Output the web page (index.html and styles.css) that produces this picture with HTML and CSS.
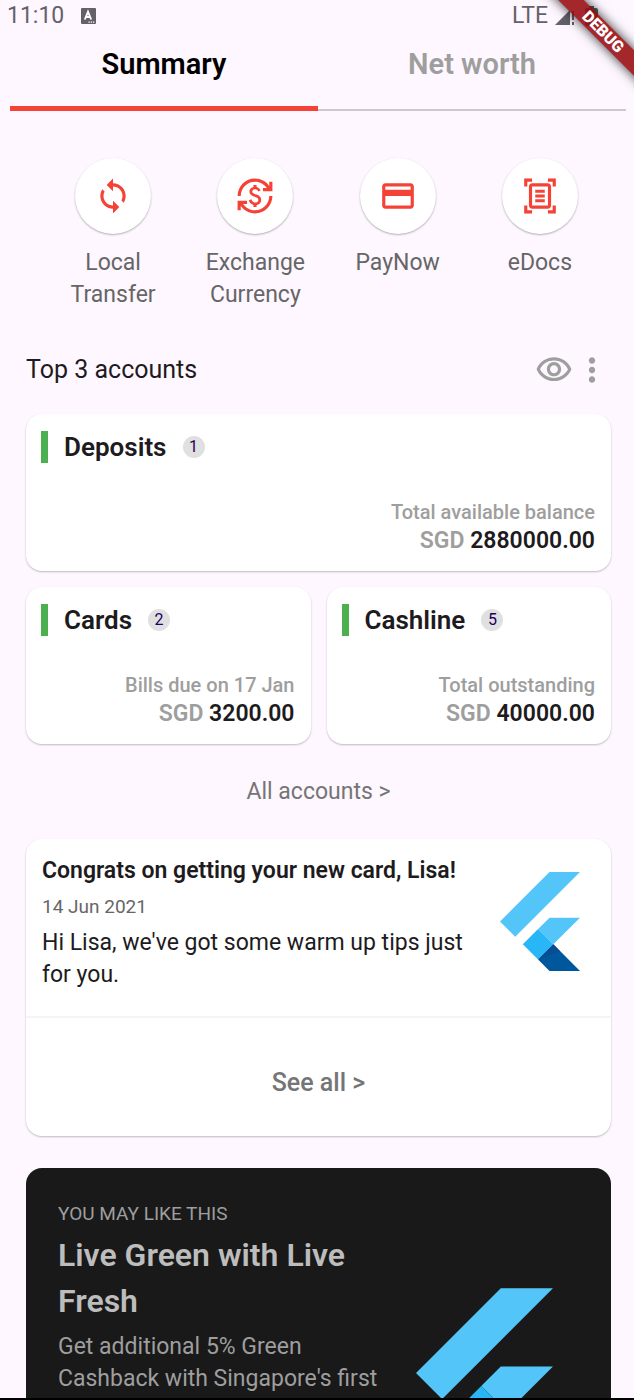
FILE: index.html
```html
<!DOCTYPE html>
<html lang="en">
<head>
<meta charset="utf-8">
<meta name="viewport" content="width=device-width, initial-scale=1">
<title>Summary</title>
<link rel="stylesheet" href="styles.css">
</head>
<body>
<svg class="defs" aria-hidden="true">
  <symbol id="flutter" viewBox="9.8 10.4 146.4 181.2">
    <path fill="#54c5f8" d="M37.7 128.9 9.8 101 100.4 10.4h55.8zM156.2 94h-55.8L79.5 114.9l27.9 27.9z"/>
    <path fill="#01579b" d="M79.5 170.7l20.9 20.9h55.8l-48.8-48.8z"/>
    <path fill="#29b6f6" d="M51.6 142.8l27.9-27.9 27.9 27.9-27.9 27.9z"/>
    <path fill="#0a4c94" d="M79.5 170.7l27.9-27.9 12 12z"/>
  </symbol>
</svg>
<div class="screen">
  <header class="status">
    <span class="clock">11:10</span>
    <svg class="status-app" viewBox="0 0 15 16" aria-hidden="true"><rect width="15" height="16" rx="1" fill="#65616a"/><path d="M3.8 11.5 7 3.8l3.2 7.7M5 9h4" fill="none" stroke="#fff" stroke-width="1.9"/><path d="M7.5 13.5h1.3v1.3H7.5zM9.8 13.5h1.3v1.3H9.8zM12 13.5h1.3v1.3H12z" fill="#fff"/></svg>
    <span class="network">LTE</span>
    <svg class="status-signal" viewBox="0 0 20 20" aria-hidden="true"><path d="M0 19 15 4v15z" fill="#65616a"/><path d="M17 5h2v9h-2zM17 16h2v3h-2z" fill="#65616a"/></svg>
    <svg class="status-battery" viewBox="0 0 13 20" aria-hidden="true"><path d="M4 0h5v2h2q2 0 2 2v14q0 2-2 2H2q-2 0-2-2V4q0-2 2-2h2z" fill="#625d66"/></svg>
    <div class="debug">DEBUG</div>
  </header>

  <nav class="tabs" role="tablist">
    <button class="tab tab-active" role="tab" aria-selected="true">Summary</button>
    <button class="tab" role="tab" aria-selected="false">Net worth</button>
  </nav>

  <main class="content">
    <section class="actions">
      <button class="action">
        <span class="circle"><svg class="icon" viewBox="0 0 24 24"><path d="M12 4V1L8 5l4 4V6c3.31 0 6 2.69 6 6 0 1.01-.25 1.97-.7 2.8l1.46 1.46C19.54 15.03 20 13.57 20 12c0-4.42-3.58-8-8-8zm0 14c-3.31 0-6-2.69-6-6 0-1.01.25-1.97.7-2.8L5.24 7.74C4.46 8.97 4 10.43 4 12c0 4.42 3.58 8 8 8v3l4-4-4-4v3z"/></svg></span>
        <span>Local<br>Transfer</span>
      </button>
      <button class="action">
        <span class="circle"><svg class="icon" viewBox="0 0 24 24"><path d="M12.89 11.1c-1.78-.59-2.64-.96-2.64-1.9 0-1.02 1.11-1.39 1.81-1.39 1.31 0 1.79.99 1.9 1.34l1.58-.67C15.39 8.03 14.72 6.56 13 6.24V5h-2v1.26C8.52 6.79 8.5 9.13 8.5 9.22c0 2.27 2.25 2.91 3.35 3.31 1.58.56 2.28 1.07 2.28 2.03 0 1.13-1.05 1.61-1.98 1.61-1.82 0-2.34-1.87-2.4-2.09l-1.65.67c.63 2.19 2.28 2.78 2.9 2.95V19h2v-1.24c.4-.09 2.9-.59 2.9-3.22 0-1.39-.61-2.61-3.01-3.44zM3 21H1v-6h6v2H4.52c1.61 2.41 4.36 4 7.48 4 4.97 0 9-4.03 9-9h2c0 6.08-4.92 11-11 11-3.72 0-7.01-1.85-9-4.67V21zM1 12C1 5.92 5.92 1 12 1c3.72 0 7.01 1.85 9 4.67V3h2v6h-6V7h2.48C17.87 4.59 15.12 3 12 3c-4.97 0-9 4.03-9 9H1z"/></svg></span>
        <span>Exchange<br>Currency</span>
      </button>
      <button class="action">
        <span class="circle"><svg class="icon" viewBox="0 0 24 24"><path d="M20 4H4c-1.11 0-1.99.89-1.99 2L2 18c0 1.11.89 2 2 2h16c1.11 0 2-.89 2-2V6c0-1.11-.89-2-2-2zm0 14H4v-6h16v6zm0-10H4V6h16v2z"/></svg></span>
        <span>PayNow</span>
      </button>
      <button class="action">
        <span class="circle"><svg class="icon" viewBox="0 0 24 24"><path d="M7 3H4v3H2V1h5v2zM22 6V1h-5v2h3v3h2zM7 21H4v-3H2v5h5v-2zM20 18v3h-3v2h5v-5h-2zM19 18c0 1.1-.9 2-2 2H7c-1.1 0-2-.9-2-2V6c0-1.1.9-2 2-2h10c1.1 0 2 .9 2 2v12zM17 6H7v12h10V6zM15 8H9v2h6V8zM15 11H9v2h6v-2zM15 14H9v2h6v-2z"/></svg></span>
        <span>eDocs</span>
      </button>
    </section>

    <section class="accounts">
      <div class="accounts-head">
        <h2>Top 3 accounts</h2>
        <button class="icon-button" aria-label="Show balances"><svg class="icon" viewBox="0 0 24 24"><path d="M12 6c3.79 0 7.17 2.13 8.82 5.5C19.17 14.87 15.79 17 12 17s-7.17-2.13-8.82-5.5C4.83 8.13 8.21 6 12 6m0-2C7 4 2.73 7.11 1 11.5 2.73 15.89 7 19 12 19s9.27-3.11 11-7.5C21.27 7.11 17 4 12 4zm0 5c1.38 0 2.5 1.12 2.5 2.5S13.38 14 12 14s-2.5-1.12-2.5-2.5S10.62 9 12 9m0-2c-2.48 0-4.5 2.02-4.5 4.5S9.52 16 12 16s4.5-2.02 4.5-4.5S14.48 7 12 7z"/></svg></button>
        <button class="icon-button" aria-label="More options"><svg class="icon" viewBox="0 0 24 24"><path d="M12 8c1.1 0 2-.9 2-2s-.9-2-2-2-2 .9-2 2 .9 2 2 2zm0 2c-1.1 0-2 .9-2 2s.9 2 2 2 2-.9 2-2-.9-2-2-2zm0 6c-1.1 0-2 .9-2 2s.9 2 2 2 2-.9 2-2-.9-2-2-2z"/></svg></button>
      </div>
      <div class="account-grid">
        <article class="card account wide">
          <div class="account-title"><h3>Deposits</h3><span class="badge">1</span></div>
          <div class="account-info"><p class="caption">Total available balance</p><p class="amount"><span class="currency">SGD</span> 2880000.00</p></div>
        </article>
        <article class="card account">
          <div class="account-title"><h3>Cards</h3><span class="badge">2</span></div>
          <div class="account-info"><p class="caption">Bills due on 17 Jan</p><p class="amount"><span class="currency">SGD</span> 3200.00</p></div>
        </article>
        <article class="card account">
          <div class="account-title"><h3>Cashline</h3><span class="badge">5</span></div>
          <div class="account-info"><p class="caption">Total outstanding</p><p class="amount"><span class="currency">SGD</span> 40000.00</p></div>
        </article>
      </div>
      <a class="all-accounts" href="#">All accounts &gt;</a>
    </section>

    <section class="card news">
      <article class="news-item">
        <div class="news-text">
          <h3>Congrats on getting your new card, Lisa!</h3>
          <p class="date">14 Jun 2021</p>
          <p>Hi Lisa, we've got some warm up tips just for you.</p>
        </div>
        <svg class="news-logo" aria-hidden="true"><use href="#flutter"/></svg>
      </article>
      <a class="see-all" href="#">See all &gt;</a>
    </section>

    <section class="promo">
      <div class="promo-text">
        <p class="eyebrow">YOU MAY LIKE THIS</p>
        <h2>Live Green with Live Fresh</h2>
        <p>Get additional 5% Green Cashback with Singapore's first</p>
      </div>
      <svg class="promo-logo" aria-hidden="true"><use href="#flutter"/></svg>
    </section>
  </main>
</div>
</body>
</html>
```
FILE: styles.css
```css
* {
  box-sizing: border-box;
}

body,
h2,
h3,
p {
  margin: 0;
}

body {
  background: #fef7ff;
  color: #1d1b20;
  font-family: Roboto, "Liberation Sans", sans-serif;
  font-size: 23px;
  line-height: 32px;
}

button {
  padding: 0;
  border: 0;
  background: none;
  font: inherit;
  color: inherit;
  cursor: pointer;
}

a {
  text-decoration: none;
}

.defs {
  display: none;
}

.screen {
  position: relative;
  display: flex;
  flex-direction: column;
  height: 100vh;
  overflow: hidden;
  border-bottom: 2px solid #000;
}

.status {
  display: flex;
  align-items: center;
  flex: none;
  height: 32px;
  padding: 0 36px 0 7px;
  color: #65616a;
}

.status-app {
  width: 15px;
  height: 16px;
  margin-left: 17px;
}

.network {
  margin-left: auto;
}

.status-signal {
  width: 20px;
  height: 20px;
  margin-left: 7px;
}

.status-battery {
  width: 13px;
  height: 20px;
  margin-left: 10px;
}

.debug {
  position: absolute;
  top: 23px;
  right: -49px;
  width: 160px;
  background: rgba(150, 10, 14, 0.88);
  box-shadow: 0 0 12px rgba(0, 0, 0, 0.8);
  color: #fff;
  font-size: 16px;
  font-weight: 900;
  line-height: 18px;
  text-align: center;
  transform: rotate(45deg);
}

.tabs {
  display: flex;
  flex: none;
  padding: 0 8px 0 10px;
}

.tab {
  flex: 1;
  height: 79px;
  padding-bottom: 14px;
  border-bottom: 2px solid #cdc7cf;
  color: #9e9e9e;
  font-size: 29px;
  font-weight: 600;
}

.tab-active {
  padding-bottom: 11px;
  border-bottom: 5px solid #f44336;
  color: #000;
}

.content {
  flex: 1;
  min-height: 0;
  padding: 47px 23px 0 26px;
  overflow-y: auto;
  scrollbar-width: none;
}

.actions {
  display: grid;
  grid-template-columns: repeat(4, 1fr);
  padding-left: 16px;
}

.action {
  display: flex;
  flex-direction: column;
  align-items: center;
  gap: 13px;
  color: #666;
}

.circle {
  display: grid;
  place-items: center;
  width: 76px;
  height: 76px;
  border-radius: 50%;
  background: #fff;
  box-shadow: 0 1px 2px rgba(0, 0, 0, 0.3);
  color: #f44336;
}

.icon {
  display: block;
  width: 38px;
  height: 38px;
  fill: currentColor;
}

.accounts-head {
  display: flex;
  align-items: center;
  margin: 40px 0 25px;
}

.accounts-head h2 {
  flex: 1;
  font-size: 25px;
  font-weight: 400;
}

.icon-button {
  color: #9e9e9e;
}

.account-grid {
  display: grid;
  grid-template-columns: 1fr 1fr;
  gap: 16px;
}

.card {
  border-radius: 16px;
  background: #fff;
  box-shadow: 0 1px 2px rgba(0, 0, 0, 0.25);
}

.account {
  display: flex;
  flex-direction: column;
  gap: 36px;
  padding: 17px 16px 14px 15px;
}

.wide {
  grid-column: 1 / -1;
}

.account-title {
  display: flex;
  align-items: center;
  gap: 16px;
}

.account-title h3 {
  padding-left: 16px;
  border-left: 7px solid #4caf50;
  font-size: 26px;
  font-weight: 600;
}

.badge {
  width: 22px;
  height: 22px;
  border-radius: 50%;
  background: #e0e0e0;
  color: #21005d;
  font-size: 16px;
  line-height: 22px;
  text-align: center;
}

.account-info {
  text-align: right;
}

.caption {
  color: #9e9e9e;
  font-size: 20px;
  font-weight: 500;
  line-height: 26px;
}

.amount {
  font-weight: 600;
}

.currency {
  color: #9e9e9e;
}

.all-accounts {
  display: block;
  margin: 32px 0 31px;
  color: #757575;
  text-align: center;
}

.news-item {
  display: flex;
  align-items: flex-start;
  gap: 32px;
  padding: 16px 31px 25px 16px;
  border-bottom: 2px solid #f5f5f5;
}

.news-text {
  flex: 1;
}

.news-text h3 {
  font-size: 23px;
  font-weight: 600;
}

.date {
  padding: 4px 0;
  color: #666;
  font-size: 19px;
}

.news-logo {
  flex: none;
  width: 80px;
  height: 99px;
  margin-top: 17px;
}

.see-all {
  display: block;
  padding: 49px 0 37px;
  color: #757575;
  font-size: 25px;
  font-weight: 500;
  text-align: center;
}

.promo {
  display: flex;
  align-items: flex-start;
  justify-content: space-between;
  margin-top: 32px;
  padding: 30px 58px 30px 32px;
  border-radius: 16px;
  background: #191919;
  color: #9e9e9e;
}

.promo-text {
  flex: 0 1 330px;
}

.eyebrow {
  padding-bottom: 2px;
  font-size: 19px;
}

.promo h2 {
  padding-bottom: 7px;
  color: #bdbdbd;
  font-size: 32px;
  font-weight: 600;
  line-height: 46px;
}

.promo-logo {
  flex: none;
  width: 137px;
  height: 170px;
  margin-top: 90px;
}
```
